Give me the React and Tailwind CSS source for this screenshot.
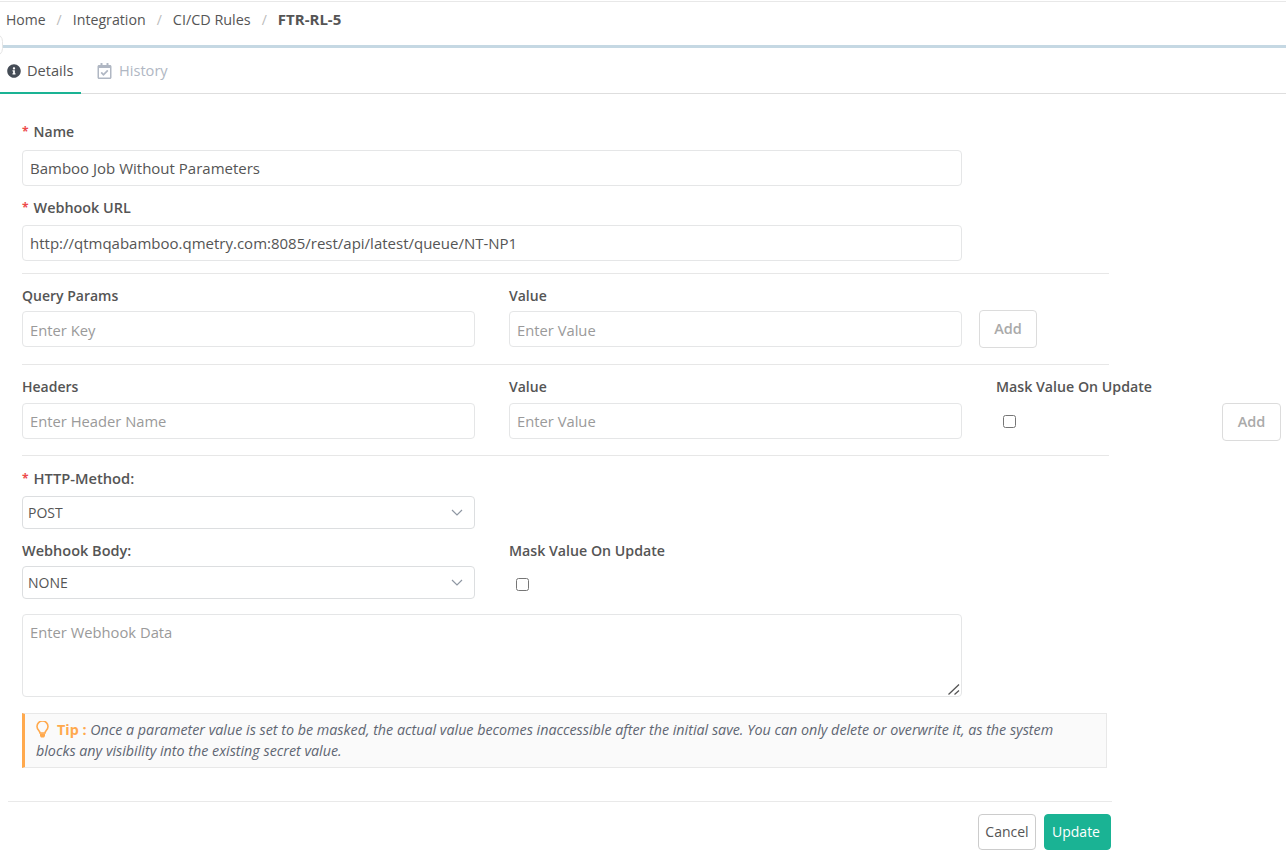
import React from "react";
import { FaInfoCircle, FaRegCalendarCheck } from "react-icons/fa";

const inputCls =
  "block h-[36px] w-full rounded-[4px] border border-[#e5e6e7] bg-white px-[7px] text-[#555] placeholder:text-[#9a9a9a] outline-none";

function Label({ children, required, className = "" }) {
  return (
    <label className={`block leading-[19px] font-semibold text-[#555] ${className || "text-[14px]"}`}>
      {required && <span className="mr-[5px] inline-block align-[1px] text-[12px] font-bold text-[#ed4b4b]">*</span>}
      {children}
    </label>
  );
}

function Field({ placeholder, value, className = "" }) {
  return (
    <input
      readOnly
      className={`${inputCls} ${value ? "text-[15px]" : "text-[14.75px]"} ${className}`}
      placeholder={placeholder}
      value={value}
    />
  );
}

function AddButton({ className = "" }) {
  return (
    <button className={`h-[38px] w-[58px] shrink-0 rounded-[4px] border border-[#dcdcdc] bg-white text-[14.5px] font-semibold text-[#aaa] ${className}`}>
      Add
    </button>
  );
}

function SelectBox({ value }) {
  return (
    <div className="relative w-[453px]">
      <select className="block h-[33px] w-full appearance-none rounded-[4px] border border-[#dcdee0] bg-white pl-[5px] text-[14px] text-[#555] outline-none" defaultValue={value}>
        <option>{value}</option>
      </select>
      <svg className="pointer-events-none absolute right-[12px] top-[13px]" width="12" height="7" viewBox="0 0 12 7" fill="none">
        <path d="M1 1l5 5 5-5" stroke="#8f97a3" strokeWidth="1.2" />
      </svg>
    </div>
  );
}

function Sep() {
  return <span className="mx-[11px] text-[#bbb]">/</span>;
}

function Bulb() {
  return (
    <svg className="mr-[8px] inline-block align-[-3px]" width="13" height="17" viewBox="0 0 13 17" fill="none">
      <path d="M4 12c0-2-3-3.2-3-6.5a5.5 5.5 0 0 1 11 0C12 8.800 9 10 9 12z" stroke="#ffa94d" strokeWidth="1.6" />
      <path d="M4 12.500h5v2.500l-1 1.500H5L4 15z" fill="#ffa94d" />
    </svg>
  );
}

export default function App() {
  return (
    <div className="relative h-[852px] w-[1286px] overflow-hidden bg-white font-['Open_Sans',sans-serif] text-[14px] text-[#555]">
      <div className="mt-[1px] h-[47px] border-t border-b-[3px] border-t-[#e8e8e8] border-b-[#c5d8e3] pl-[6px] pt-[8px] leading-[19px]">
        <div className="flex">
          <span>Home</span>
          <Sep />
          <span className="text-[14.2px]">Integration</span>
          <Sep />
          <span className="text-[14.4px]">CI/CD Rules</span>
          <Sep />
          <span className="text-[15px] font-bold">FTR-RL-5</span>
        </div>
      </div>
      <div className="absolute left-[-14px] top-[33px] h-[24px] w-[17px] rounded-full border border-[#e5e5e5] bg-white" />

      <div className="flex h-[46px] border-b border-[#dedede] text-[14.6px]">
        <div className="flex h-[46px] w-[81px] items-center gap-[6px] border-b-2 border-[#1ab394] pl-[7px] pt-[2px]">
          <FaInfoCircle className="h-[14px] w-[14px] text-[#454c56]" />
          <span>Details</span>
        </div>
        <div className="flex h-[45px] items-center gap-[7px] pl-[16px] text-[#b0b7c3]">
          <FaRegCalendarCheck className="h-[16px] w-[15px]" />
          <span>History</span>
        </div>
      </div>

      <div className="pl-[22px] pt-[28px]">
        <Label required>Name</Label>
        <div className="mt-[9px] w-[940px]">
          <Field value="Bamboo Job Without Parameters" />
        </div>
        <Label required className="mt-[12px] text-[14.4px]">Webhook URL</Label>
        <div className="mt-[8px] w-[940px]">
          <Field value="http://qtmqabamboo.qmetry.com:8085/rest/api/latest/queue/NT-NP1" />
        </div>
        <hr className="mt-[12px] w-[1087px] border-[#e7e7e7]" />

        <div className="mt-[12px] flex gap-[34px]">
          <div className="w-[453px]">
            <Label>Query Params</Label>
            <Field className="mt-[6px] pt-[2px]" placeholder="Enter Key" />
          </div>
          <div className="w-[453px]">
            <Label>Value</Label>
            <Field className="mt-[6px] pt-[2px]" placeholder="Enter Value" />
          </div>
          <AddButton className="-ml-[17px] mt-[24px]" />
        </div>
        <hr className="mt-[16px] w-[1087px] border-[#e7e7e7]" />

        <div className="mt-[12px] flex gap-[34px]">
          <div className="w-[453px]">
            <Label>Headers</Label>
            <Field className="mt-[7px]" placeholder="Enter Header Name" />
          </div>
          <div className="w-[453px]">
            <Label>Value</Label>
            <Field className="mt-[7px]" placeholder="Enter Value" />
          </div>
          <div className="w-[226px]">
            <Label className="text-[14.2px]">Mask Value On Update</Label>
            <input type="checkbox" className="ml-[7px] mt-[19px] block h-[13px] w-[13px]" />
          </div>
          <AddButton className="-ml-[34px] mt-[26px] w-[59px]" />
        </div>
        <hr className="mt-[14px] w-[1087px] border-[#e7e7e7]" />

        <Label required className="mt-[13px] text-[14.7px]">HTTP-Method:</Label>
        <div className="mt-[8px]">
          <SelectBox value="POST" />
        </div>

        <div className="mt-[12px] flex gap-[34px]">
          <div className="w-[453px]">
            <Label className="text-[14.5px]">Webhook Body:</Label>
            <div className="mt-[6px]">
              <SelectBox value="NONE" />
            </div>
          </div>
          <div>
            <Label className="text-[14.2px]">Mask Value On Update</Label>
            <input type="checkbox" className="ml-[7px] mt-[18px] block h-[13px] w-[13px]" />
          </div>
        </div>

        <div className="relative mt-[15px] w-[940px]">
          <textarea
            readOnly
            placeholder="Enter Webhook Data"
            className="block h-[83px] w-full resize-none rounded-[4px] border border-[#e5e6e7] px-[7px] py-[6px] text-[14.75px] text-[#555] placeholder:text-[#9a9a9a] outline-none"
          />
          <svg className="pointer-events-none absolute bottom-[2px] right-[2px]" width="12" height="11" viewBox="0 0 12 11" fill="none">
            <path d="M0.500 10.500L11 0.500M6.500 10.500L11 6.500" stroke="#555" strokeWidth="1.3" />
          </svg>
        </div>

        <div className="mt-[16px] h-[55px] w-[1085px] border border-l-[3px] border-[#e8e8e8] border-l-[#ffa94d] bg-[#fafafa] px-[11px] py-[5px] text-[14.3px] leading-[21px] italic text-[#5f6672]">
          <Bulb />
          <b className="font-bold not-italic text-[#ffa94d]">Tip : </b>
          Once a parameter value is set to be masked, the actual value becomes inaccessible after the initial save. You can only delete or overwrite it, as the system blocks any visibility into the existing secret value.
        </div>
      </div>

      <div className="ml-[8px] mt-[33px] w-[1104px] border-t border-[#e9e9e9] pt-[12px]">
        <div className="flex justify-end gap-[8px] pr-[1px]">
          <button className="h-[36px] w-[58px] rounded-[4px] border border-[#ccc] bg-white pb-[2px] text-[#555]">Cancel</button>
          <button className="h-[36px] w-[67px] rounded-[4px] border border-[#1ab394] bg-[#1ab394] pb-[2px] pr-[3px] text-white">Update</button>
        </div>
      </div>
    </div>
  );
}
